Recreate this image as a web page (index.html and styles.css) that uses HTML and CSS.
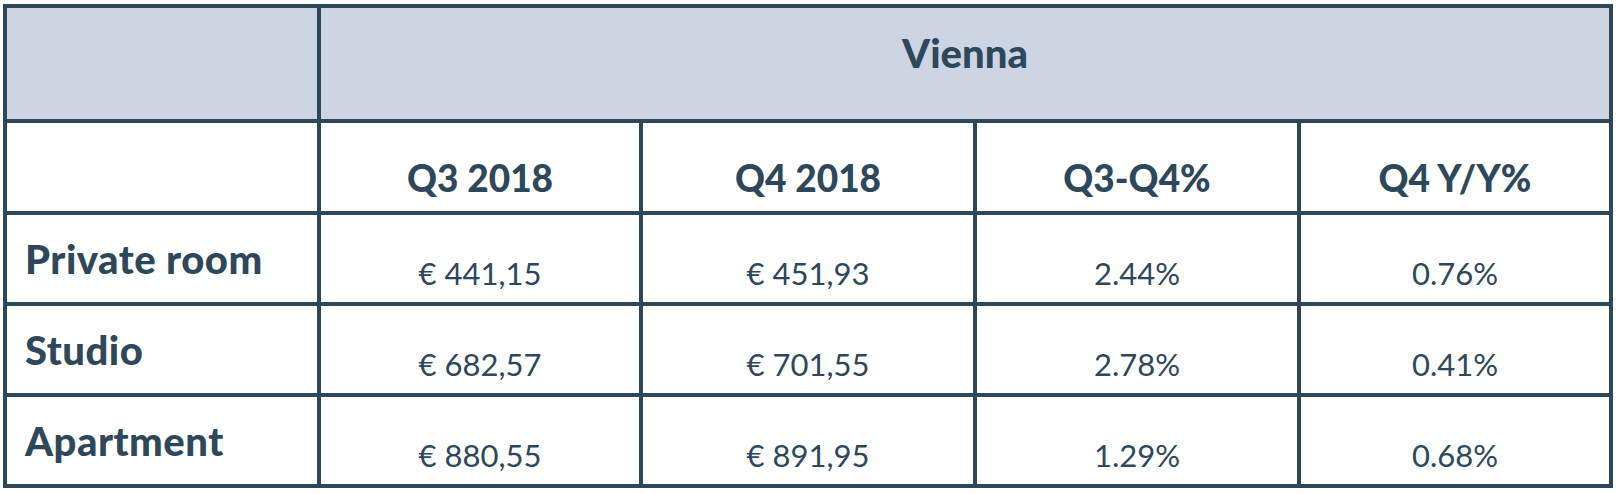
FILE: index.html
```html
<!DOCTYPE html>
<html lang="en">
<head>
<meta charset="utf-8">
<title>Vienna prices</title>
<link rel="stylesheet" href="styles.css">
</head>
<body>
<div class="grid" role="table">
  <div class="cell head corner"></div>
  <div class="cell head city">Vienna</div>

  <div class="cell blank"></div>
  <div class="cell colhead">Q3 2018</div>
  <div class="cell colhead">Q4 2018</div>
  <div class="cell colhead">Q3-Q4%</div>
  <div class="cell colhead">Q4 Y/Y%</div>

  <div class="cell label">Private room</div>
  <div class="cell val">€ 441,15</div>
  <div class="cell val">€ 451,93</div>
  <div class="cell val">2.44%</div>
  <div class="cell val">0.76%</div>

  <div class="cell label">Studio</div>
  <div class="cell val">€ 682,57</div>
  <div class="cell val">€ 701,55</div>
  <div class="cell val">2.78%</div>
  <div class="cell val">0.41%</div>

  <div class="cell label">Apartment</div>
  <div class="cell val">€ 880,55</div>
  <div class="cell val">€ 891,95</div>
  <div class="cell val">1.29%</div>
  <div class="cell val">0.68%</div>
</div>
</body>
</html>
```

FILE: styles.css
```css
html, body {
  margin: 0;
  background: #ffffff;
}
body {
  padding: 4px 0 0 3px;
  font-family: "Lato", "Liberation Sans", sans-serif;
  color: #2d475b;
}
.grid {
  display: grid;
  width: max-content;
  grid-template-columns: 310px 318px 330px 320px 308px;
  grid-template-rows: 111px 88px 87px 87px 87px;
  gap: 4px;
  padding: 4px;
  background: #2f4859;
}
.cell {
  background: #ffffff;
  display: flex;
  align-items: center;
  justify-content: center;
  line-height: 1.2;
  white-space: nowrap;
  box-sizing: border-box;
}
.head {
  background: #cdd5e3;
}
.city {
  grid-column: 2 / 6;
  font-weight: 900;
  font-size: 40px;
  padding-bottom: 21px;
}
.colhead {
  font-weight: 900;
  font-size: 37px;
  padding-top: 22px;
}
.label {
  justify-content: flex-start;
  padding-left: 18px;
  font-weight: 900;
  font-size: 40px;
  letter-spacing: 0.5px;
}
.val {
  font-weight: 400;
  font-size: 31px;
  padding-top: 31px;
}
```
